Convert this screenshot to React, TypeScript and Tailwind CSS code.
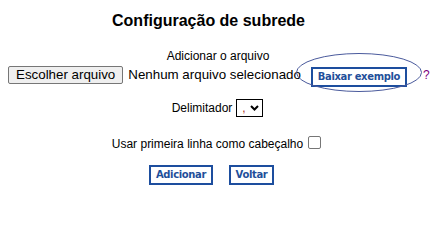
import React from "react";

const sans = "font-['Liberation_Sans',Arial,sans-serif]";
const btnFont = "font-['DejaVu_Sans',Verdana,sans-serif]";

function BlueButton({ children, className = "" }: { children: React.ReactNode; className?: string }) {
  return (
    <button
      type="button"
      className={`${btnFont} h-[20px] whitespace-nowrap border-2 border-[#1d4e9e] bg-white px-0 text-[10px] font-bold leading-[16px] tracking-[-0.35px] text-[#1f4f9a] ${className}`}
    >
      {children}
    </button>
  );
}

export default function App() {
  return (
    <div className={`${sans} w-[444px] h-[205px] bg-white text-black overflow-hidden`}>
      <div className="mt-[12px] flex justify-center pr-[27px]">
        <h2 className="text-[16px] font-bold leading-[18px]">Configuração de subrede</h2>
      </div>

      <div className="mt-[19px] flex justify-center pr-[8px]">
        <span className="text-[12px] leading-[14px]">Adicionar o arquivo</span>
      </div>

      <div className="mt-[2px] flex h-[19px] items-center pl-[8px]">
        <span className="flex h-[18px] items-center rounded-[2px] border border-[#767676] bg-[#efefef] px-[7px] text-[13.33px] leading-[15px]">
          Escolher arquivo
        </span>
        <span className="ml-[5px] text-[13.33px] leading-[15px]">Nenhum arquivo selecionado</span>
        <div className="relative ml-[10px]">
          <BlueButton className="h-[19px] w-[96px] leading-[15px]">Baixar exemplo</BlueButton>
          <svg
            className="pointer-events-none absolute left-[-15px] top-[-10px]"
            width="128"
            height="40"
            viewBox="0 0 128 40"
          >
            <ellipse cx="63" cy="19.5" rx="62.5" ry="19" fill="none" stroke="#4a5a9c" strokeWidth="1" />
          </svg>
        </div>
        <span className="ml-[16px] text-[12px] leading-[14px] text-[#800080]">?</span>
      </div>

      <div className="mt-[15px] flex h-[18px] items-center justify-center gap-[4px] pr-[9px]">
        <span className="text-[12px] leading-[14px]">Delimitador</span>
        <span className="relative flex h-[18px] w-[27px] items-center border border-black bg-white">
          <span className="ml-[5px] text-[12px] leading-[14px] text-[#b03020]">,</span>
          <svg className="absolute left-[13px] top-[5px]" width="9" height="6" viewBox="0 0 9 6">
            <path d="M1 1 L4.5 4.5 L8 1" fill="none" stroke="#000" strokeWidth="2" />
          </svg>
        </span>
      </div>

      <div className="mt-[18px] flex h-[16px] items-start justify-center gap-[5px] pr-[11px]">
        <span className="mt-[2px] text-[12px] leading-[14px]">Usar primeira linha como cabeçalho</span>
        <span className="mt-[1px] block h-[13px] w-[13px] rounded-[2px] border border-[#767676] bg-white" />
      </div>

      <div className="mt-[14px] flex justify-center gap-[16px] pr-[21px]">
        <BlueButton className="w-[64px]">Adicionar</BlueButton>
        <BlueButton className="w-[45px]">Voltar</BlueButton>
      </div>
    </div>
  );
}
